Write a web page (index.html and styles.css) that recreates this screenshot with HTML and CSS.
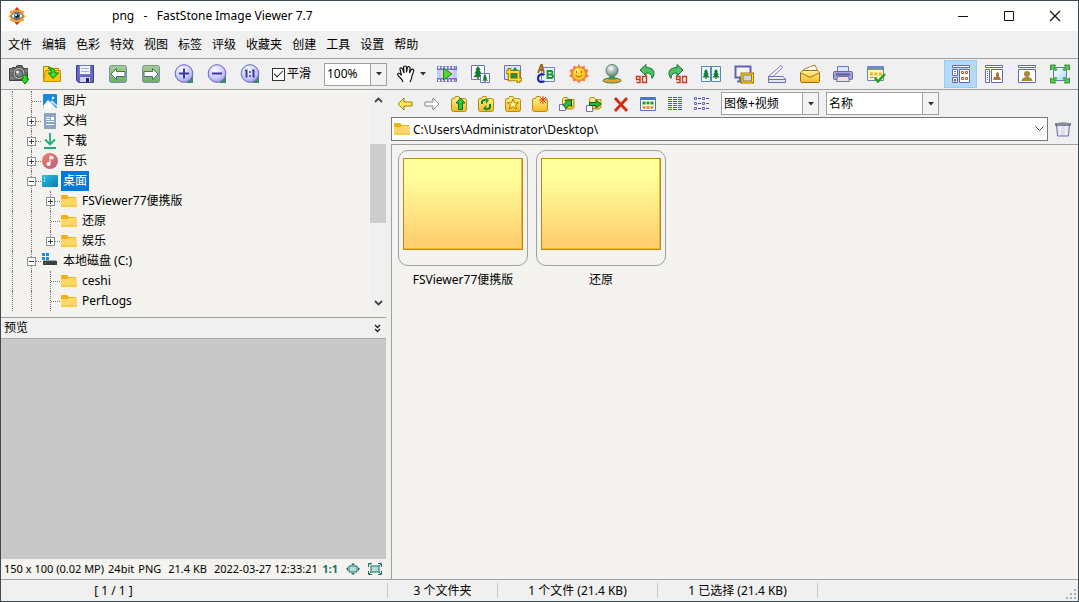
FILE: index.html
```html
<!DOCTYPE html>
<html lang="zh-CN">
<head>
    <meta charset="UTF-8">
    <meta name="viewport" content="width=device-width, initial-scale=1.0">
    <title>png - FastStone Image Viewer 7.7</title>
    <link rel="stylesheet" href="styles.css">
</head>
<body>
    <!-- Shared gradients and symbols -->
    <svg class="defs" width="0" height="0" aria-hidden="true">
        <defs>
            <linearGradient id="gold" x1="0" y1="0" x2="0" y2="1"><stop offset="0" stop-color="#fff59a"/><stop offset="1" stop-color="#f5b820"/></linearGradient>
            <linearGradient id="sky" x1="0" y1="0" x2="1" y2="1"><stop offset="0" stop-color="#ffffff"/><stop offset="1" stop-color="#a5dcf5"/></linearGradient>
            <linearGradient id="leaf" x1="0" y1="0" x2="0" y2="1"><stop offset="0" stop-color="#a4d08c"/><stop offset="1" stop-color="#6caf62"/></linearGradient>
            <radialGradient id="lilac" cx=".4" cy=".3" r=".8"><stop offset="0" stop-color="#fbfbff"/><stop offset=".6" stop-color="#c8c8fa"/><stop offset="1" stop-color="#9090e0"/></radialGradient>
            <radialGradient id="ball" cx=".4" cy=".3" r=".7"><stop offset="0" stop-color="#fafafa"/><stop offset="1" stop-color="#608878"/></radialGradient>
            <linearGradient id="music" x1="0" y1="0" x2="1" y2="1"><stop offset="0" stop-color="#f08060"/><stop offset="1" stop-color="#b86088"/></linearGradient>
            <linearGradient id="desk" x1="0" y1="0" x2="1" y2="1"><stop offset="0" stop-color="#2cc4dc"/><stop offset="1" stop-color="#0a78b8"/></linearGradient>
        </defs>
        <symbol id="folder" viewBox="0 0 16 16">
            <path d="M0 3q0-1 1-1h5l2 2h7v9H0z" fill="#f0b018"/>
            <path d="M0 6h6l2-1h7q1 0 1 1v7q0 1-1 1H1q-1 0-1-1z" fill="#ffd766"/>
            <path d="M0 12h16v1q0 1-1 1H1q-1 0-1-1z" fill="#fcc848"/>
        </symbol>
        <symbol id="book" viewBox="0 0 18 18">
            <path d="M1.500 5q0-1.500 1.500-1.500h1.500l1-2H9l1 2h4.500q2 0 2 2v9q0 2-2 2h-11q-2 0-2-2z" fill="url(#gold)" stroke="#b88a10"/>
        </symbol>
        <symbol id="caret" viewBox="0 0 6 4"><path d="M0 0h6L3 3.500z" fill="#333"/></symbol>
        <symbol id="tree-shape" viewBox="0 0 10 14">
            <path d="M5 0L8 4H6.500L9 8H7l3 4H0l3-4H1l2.500-4H2z" fill="#108030"/><path d="M4 12h2v2H4z" fill="#805020"/>
        </symbol>
    </svg>

    <div class="window">
        <header class="title-bar">
            <svg class="app-icon" width="18" height="18" viewBox="0 0 18 18">
                <path d="M9 0l3 3 4 1-.5 4L18 9l-2.500 2 .5 3-4 1-3 3-3-3-4-1 .5-3L0 9l2.500-1L2 4l4-1z" fill="#f0a040"/>
                <path d="M6.500 3L9 0l2.500 3zM6.500 15L9 18l2.500-3z" fill="#d03818"/>
                <path d="M2.500 9q6.500-8 13 0-6.500 7-13 0z" fill="#f4f4e8" stroke="#605038"/>
                <circle cx="9" cy="9" r="3.200" fill="#4c7890"/><circle cx="9" cy="9" r="1.800" fill="#111"/><circle cx="8" cy="8" r="1" fill="#fff"/>
            </svg>
            <h1>png&nbsp;&nbsp; -&nbsp;&nbsp; FastStone Image Viewer 7.7</h1>
            <div class="window-buttons">
                <button type="button" aria-label="最小化"><svg width="12" height="12"><path d="M1 6.500h10" stroke="#111"/></svg></button>
                <button type="button" aria-label="最大化"><svg width="12" height="12"><path d="M1.500 1.500h9v9h-9z" fill="none" stroke="#111"/></svg></button>
                <button type="button" aria-label="关闭"><svg width="12" height="12"><path d="M1 1l10 10M11 1L1 11" stroke="#111" stroke-width="1.200"/></svg></button>
            </div>
        </header>

        <nav class="menu-bar">
            <button type="button">文件</button>
            <button type="button">编辑</button>
            <button type="button">色彩</button>
            <button type="button">特效</button>
            <button type="button">视图</button>
            <button type="button">标签</button>
            <button type="button">评级</button>
            <button type="button">收藏夹</button>
            <button type="button">创建</button>
            <button type="button">工具</button>
            <button type="button">设置</button>
            <button type="button">帮助</button>
        </nav>

        <div class="toolbar">
            <button type="button" class="tool" aria-label="获取图像"><svg viewBox="0 0 20 20">
                <path d="M.5 4.500h3v-1h3v1l1.500-3h5l1.500 3h4v12H.5z" fill="#707070" stroke="#444"/>
                <path d="M1 7h18M1 14h18" stroke="#909090"/><circle cx="10" cy="9.500" r="6" fill="#c8c8c8" stroke="#404040"/>
                <circle cx="10" cy="9.500" r="4" fill="#788088" stroke="#444"/><circle cx="8.500" cy="8" r="1.500" fill="#e8f0f4"/>
                <path d="M14 11h4v4h2l-4 5-4-5h2z" fill="#20e020" stroke="#107810"/></svg></button>
            <button type="button" class="tool" aria-label="打开"><svg viewBox="0 0 20 20">
                <path d="M1.500 2.500h6l2 2h7v13h-15z" fill="#ffe028" stroke="#b88000"/>
                <path d="M3.500 6.500h15v11h-17z" fill="#fcc414" stroke="#c89000"/>
                <path d="M6 4q7-1 7 5h3.500L11 14.500 6.500 9H10q0-3-4-5z" fill="#30e830" stroke="#087808"/></svg></button>
            <button type="button" class="tool" aria-label="另存为"><svg viewBox="0 0 20 20">
                <path d="M1.500 1.500h17v17h-15l-2-2z" fill="#6666c4" stroke="#3c3c90"/>
                <path d="M4.500 1.500h11v9h-11z" fill="#f4f4fc" stroke="#7878b8"/><path d="M6 4.500h8M6 7.500h8" stroke="#aab0d0"/>
                <path d="M5 13h10v5H5z" fill="#d0d0e8"/><path d="M11 14h3v4h-3z" fill="#282860"/></svg></button>
            <button type="button" class="tool" aria-label="上一张"><svg viewBox="0 0 20 20">
                <rect x="1.500" y="1.500" width="17" height="17" rx="2" fill="url(#leaf)" stroke="#7890b0"/>
                <path d="M3 10l5.500-5.500v3H17v5H8.500v3z" fill="#fff" stroke="#4a6890"/></svg></button>
            <button type="button" class="tool" aria-label="下一张"><svg viewBox="0 0 20 20">
                <rect x="1.500" y="1.500" width="17" height="17" rx="2" fill="url(#leaf)" stroke="#7890b0"/>
                <path d="M17 10l-5.500-5.500v3H3v5h8.500v3z" fill="#fff" stroke="#4a6890"/></svg></button>
            <button type="button" class="tool" aria-label="放大"><svg viewBox="0 0 20 20">
                <path d="M12 19h7v-8z" fill="#389060"/><circle cx="10" cy="9.500" r="8.800" fill="url(#lilac)" stroke="#6464c4"/>
                <path d="M5 9.500h10M10 4.500v10" stroke="#3838a8" stroke-width="2"/></svg></button>
            <button type="button" class="tool" aria-label="缩小"><svg viewBox="0 0 20 20">
                <path d="M12 19h7v-8z" fill="#389060"/><circle cx="10" cy="9.500" r="8.800" fill="url(#lilac)" stroke="#6464c4"/>
                <path d="M5 9.500h10" stroke="#3838a8" stroke-width="2"/></svg></button>
            <button type="button" class="tool" aria-label="实际大小"><svg viewBox="0 0 20 20">
                <path d="M12 19h7v-8z" fill="#389060"/><circle cx="10" cy="9.500" r="8.800" fill="url(#lilac)" stroke="#6464c4"/>
                <path d="M6.500 5.500v8M13.500 5.500v8" stroke="#3838a8" stroke-width="2"/><path d="M5 6.500h1M12 6.500h1M10 7v2M10 11v2" stroke="#3838a8" stroke-width="1.500"/></svg></button>

            <label class="smooth"><input type="checkbox" checked>平滑</label>

            <span class="combo combo-zoom">
                <select aria-label="缩放"><option>100%</option></select>
                <span class="combo-arrow"><svg width="6" height="4"><use href="#caret"/></svg></span>
            </span>

            <button type="button" class="tool tool-hand" aria-label="手形工具"><svg viewBox="0 0 20 20">
                <path d="M7 18q-1-3-4-5.500-2.500-2.500-.5-3.200 1.500-.3 3 2L4 5.500Q3.800 3.800 5 3.800t1.700 1.500L8 9 7.600 3.500Q7.500 2 9 2t1.500 1.500V8.500l.8-4.500q.2-1.500 1.500-1.300t1.200 1.600L13.500 9l1.500-3q.8-1.200 2-.6t.5 2L16 12q-.5 3-2 6" fill="#fff" stroke="#111" stroke-width="1.200"/></svg>
                <svg class="drop" viewBox="0 0 6 4"><use href="#caret"/></svg></button>
            <button type="button" class="tool" aria-label="幻灯片"><svg viewBox="0 0 20 20">
                <path d="M0 2h20v16H0z" fill="#7070c8"/><path d="M1 3.500h18M1 16.500h18" stroke="#fff" stroke-width="2" stroke-dasharray="2 1.500"/>
                <path d="M0 6h4v8H0zM16 6h4v8h-4z" fill="#b8d0f8"/><path d="M4 6h12v8H4z" fill="#f4c8e8"/>
                <path d="M6.500 4l8.500 6-8.500 6z" fill="#50d830" stroke="#208818"/></svg></button>
            <button type="button" class="tool" aria-label="调整大小"><svg viewBox="0 0 20 20">
                <path d="M1.500 1.500h13v14h-13z" fill="#fff" stroke="#7070c8"/><use href="#tree-shape" x="2" y="2" width="12" height="13"/>
                <path d="M10.500 9.500h9v9h-9z" fill="#fff" stroke="#7070c8"/><use href="#tree-shape" x="12" y="10" width="6" height="8"/></svg></button>
            <button type="button" class="tool" aria-label="裁剪"><svg viewBox="0 0 20 20">
                <path d="M1.500 1.500h16v14h-16z" fill="#d4e8fc" stroke="#7070c8"/><path d="M7 8h8v7H7z" fill="#189050"/><path d="M9 7l3-4 3 4z" fill="#189050"/>
                <path d="M6.500 4v11.500H19M3 8h12.500V19" fill="none" stroke="#906400" stroke-width="3.600"/>
                <path d="M6.500 5v10.500H18.500M3.500 8h12V18.500" fill="none" stroke="#ffe020" stroke-width="1.800"/></svg></button>
            <button type="button" class="tool" aria-label="画板"><svg viewBox="0 0 20 20">
                <path d="M5.500 3.500h13v14h-13z" fill="#eef4fc" stroke="#6888c8"/>
                <path d="M2 9l3-8h1l2 8M3 6h4" fill="none" stroke="#a06810" stroke-width="1.800"/>
                <path d="M11.500 14V7h3q2 0 2 1.500t-2 2h-3 3.500q2 0 2 1.800t-2 1.700z" fill="none" stroke="#109828" stroke-width="1.800"/>
                <path d="M8.500 11Q7 9.800 4.500 10.500 2 11.500 2 14.500q0 3 3 3.500 2 .2 3.500-1" fill="none" stroke="#1818d0" stroke-width="2"/></svg></button>
            <button type="button" class="tool" aria-label="调整光线"><svg viewBox="0 0 20 20">
                <path d="M10 0l2 3 3.500-1.500.5 3.500 3.500.8L18 9.500l2 3-3.500 1.200-.5 3.800-3.500-1L10 19.500l-2.500-3-3.500 1-.5-3.800L0 12.500l2-3L.5 5.800 4 5l.5-3.500L8 3z" fill="#f08050"/>
                <circle cx="10" cy="9.800" r="6.500" fill="#ffd028" stroke="#e88818"/><circle cx="8" cy="7" r="2.500" fill="#fff080"/>
                <path d="M7.500 7v2M12.500 7v2M6.500 11q3.500 4 7 0" fill="none" stroke="#a85010"/></svg></button>
            <button type="button" class="tool" aria-label="调整颜色"><svg viewBox="0 0 20 20">
                <ellipse cx="10" cy="16.500" rx="9" ry="2.500" fill="#f0a028" stroke="#208848"/><path d="M8 11h4l2 4.500H6z" fill="#309858"/>
                <circle cx="10" cy="6.500" r="6" fill="url(#ball)" stroke="#588070"/></svg></button>
            <button type="button" class="tool" aria-label="向左旋转"><svg viewBox="0 0 20 20">
                <path d="M5 6l6-5.500v3q8 0 8 6 0 2.500-2 5 0-6-6-5.500v3z" fill="#50c060" stroke="#18703c"/>
                <path d="M5 15.500H1.500v-3H5v6H1.500M7.500 12.500h4v6h-4z" fill="none" stroke="#c83820" stroke-width="1.400"/></svg></button>
            <button type="button" class="tool" aria-label="向右旋转"><svg viewBox="0 0 20 20">
                <path d="M15 6L9 .5v3Q1 3.500 1 9.500 1 12 3 14.500 3 8.500 9 9v3z" fill="#50c060" stroke="#18703c"/>
                <path d="M12 15.500H8.500v-3H12v6H8.500M14.500 12.500h4v6h-4z" fill="none" stroke="#c83820" stroke-width="1.400"/></svg></button>
            <button type="button" class="tool" aria-label="比较"><svg viewBox="0 0 20 20">
                <path d="M.5 2.500h9v15h-9zM10.500 2.500h9v15h-9z" fill="#e8f8fc" stroke="#5888b8"/>
                <use href="#tree-shape" x="1" y="5" width="8" height="10"/><use href="#tree-shape" x="11" y="5" width="8" height="10"/></svg></button>
            <button type="button" class="tool" aria-label="屏幕"><svg viewBox="0 0 20 20">
                <path d="M1.500 2.500h15v11h-15z" fill="#f4f4ff" stroke="#6060b8" stroke-width="2"/><path d="M3 17.500h6M6 14v3" stroke="#6060b8" stroke-width="2"/>
                <path d="M8 10h10.500v8H8z" fill="#ccd4ec" stroke="#a07800" stroke-width="3"/><path d="M8 10h10.500v8H8z" fill="none" stroke="#ffe028"/></svg></button>
            <button type="button" class="tool" aria-label="扫描"><svg viewBox="0 0 20 20">
                <path d="M1 13L14 1.500l1.500 2L6 12.500z" fill="#fff" stroke="#7070b8"/><path d="M1.500 12.500h14.500l2.500 2.500v3.500h-17z" fill="#e4e4f8" stroke="#7070b8"/>
                <path d="M1.500 15.500h17" stroke="#7070b8"/><path d="M7 13.500h8" stroke="#fff"/></svg></button>
            <button type="button" class="tool" aria-label="电子邮件"><svg viewBox="0 0 20 20">
                <path d="M3 8l1-3 11-4 3 7z" fill="#fff" stroke="#a88830"/><path d="M.5 8.500l2-2h15l2 2v9l-1 1h-17l-1-1z" fill="url(#gold)" stroke="#9c7010"/>
                <path d="M1 9l8 4h2l8-4" fill="none" stroke="#9c7010"/></svg></button>
            <button type="button" class="tool" aria-label="打印"><svg viewBox="0 0 20 20">
                <path d="M4.500 8V2.500h11V8" fill="#d8e8fa" stroke="#7078b0"/><rect x=".5" y="7.500" width="19" height="8" rx="1" fill="#a0a0dc" stroke="#6868a8"/>
                <path d="M3 10.500h14" stroke="#64588c" stroke-width="2"/><path d="M4.500 12.500h11l1 5h-13z" fill="#f8dce0" stroke="#7078a8"/></svg></button>
            <button type="button" class="tool" aria-label="设置"><svg viewBox="0 0 20 20">
                <path d="M1.500 2.500h16v14h-16z" fill="#fdf4c0" stroke="#6888b8"/><path d="M2 3h15v3H2z" fill="#7890b0"/>
                <path d="M4 8.500h3v3H4zM8.500 8.500h3v3h-3zM13 8.500h3v3h-3z" fill="#e8b828"/><path d="M4 13.500h7" stroke="#8898b0"/>
                <path d="M9 14l3 3.500L19 10" fill="none" stroke="#18a020" stroke-width="2.500"/></svg></button>

            <div class="view-modes">
                <button type="button" class="tool active" aria-label="浏览视图"><svg viewBox="0 0 20 20">
                    <path d="M1.500 1.500h17v2h-17zM1.500 5.500h5v6h-5zM1.500 13.500h5v5h-5zM8.500 5.500h10v13h-10z" fill="#fff" stroke="#6464b8"/>
                    <path d="M3 7.500h2M3 9.500h2" stroke="#5878c8"/><path d="M3 17q1-4 2 0z" stroke="#a07830"/>
                    <path d="M10.500 7.500h2v2h-2zM14.500 7.500h2v2h-2zM10.500 13.500h2v2h-2zM14.500 13.500h2v2h-2z" fill="#fff4c0" stroke="#c05820"/></svg></button>
                <button type="button" class="tool" aria-label="窗口视图"><svg viewBox="0 0 20 20">
                    <path d="M1.500 1.500h17v2h-17zM1.500 5.500h4v13h-4zM7.500 5.500h11v13h-11z" fill="#fff" stroke="#6464b8"/><path d="M3.500 7v10" stroke="#5878c8" stroke-dasharray="1 1"/>
                    <path d="M9 16l1-3h2v-4l2-1 1 2v3h1l1 3z" fill="#a87838"/></svg></button>
                <button type="button" class="tool" aria-label="单图视图"><svg viewBox="0 0 20 20">
                    <path d="M1.500 1.500h17v2h-17zM1.500 5.500h17v13h-17z" fill="#fff" stroke="#6464b8"/>
                    <circle cx="10" cy="10" r="3" fill="#a88838"/><path d="M4.500 17q0-3 4-4h3q4 1 4 4z" fill="#a88838"/></svg></button>
                <button type="button" class="tool" aria-label="全屏"><svg viewBox="0 0 20 20">
                    <path d="M3.500 3.500h13v13h-13z" fill="url(#sky)" stroke="#5878b8"/>
                    <path d="M.5 1h5L4.500 3 7 5.500 5.500 7 3 4.500.5 6zM19.500 1v5L17 4.500 14.500 7 13 5.500 15.500 3l-1-2zM.5 19v-5L3 15.500 5.500 13 7 14.500 4.500 17l1 2zM19.500 19h-5l1-2-2.500-2.500 1.500-1.500 2.500 2.500 2.500-1.500z" fill="#50d040" stroke="#208020" stroke-width=".8"/></svg></button>
            </div>
        </div>

        <main class="content">
            <aside class="sidebar">
                <div class="tree-panel">
                    <ul class="tree">
                        <li><i class="guide line"></i><i class="guide line branch"></i><svg class="node-icon" viewBox="0 0 16 16"><rect x="1" y="1" width="14" height="14" rx="1" fill="#1888d8"/><path d="M1 13l5-6 8 8H2z" fill="#fff"/><path d="M8 9l2-2 5 5v2z" fill="#b8e0fa"/><circle cx="11" cy="5" r="1.200" fill="#fff"/></svg><span class="name">图片</span></li>
                        <li><i class="guide line"></i><i class="guide line branch"><button type="button" class="toggle" aria-label="展开"></button></i><svg class="node-icon" viewBox="0 0 16 16"><path d="M2 0h12v16H2z" fill="#8ca4c4"/><path d="M4 4.500h4M4 6.500h4M4 8.500h8M4 11.500h8" stroke="#fff"/><path d="M9 4h3v3H9z" fill="#fff"/></svg><span class="name">文档</span></li>
                        <li><i class="guide line"></i><i class="guide line branch"><button type="button" class="toggle" aria-label="展开"></button></i><svg class="node-icon" viewBox="0 0 16 16"><path d="M8 0v11M3 6.500l5 5 5-5M2 15h12" fill="none" stroke="#18b080" stroke-width="1.800"/></svg><span class="name">下载</span></li>
                        <li><i class="guide line"></i><i class="guide line branch"><button type="button" class="toggle" aria-label="展开"></button></i><svg class="node-icon" viewBox="0 0 16 16"><circle cx="8" cy="8" r="8" fill="url(#music)"/><circle cx="6.500" cy="11" r="2" fill="#fff"/><path d="M8 11V3l3 1v2L8 5" fill="#fff" stroke="#fff"/></svg><span class="name">音乐</span></li>
                        <li><i class="guide line"></i><i class="guide line branch"><button type="button" class="toggle open" aria-label="折叠"></button></i><svg class="node-icon" viewBox="0 0 16 16"><rect y="2" width="16" height="12" rx="1" fill="url(#desk)"/><path d="M2 5h1M2 8h1" stroke="#fff" stroke-width="1.500"/></svg><span class="name selected">桌面</span></li>
                        <li><i class="guide line"></i><i class="guide line"></i><i class="guide line branch"><button type="button" class="toggle" aria-label="展开"></button></i><svg class="node-icon"><use href="#folder"/></svg><span class="name">FSViewer77便携版</span></li>
                        <li><i class="guide line"></i><i class="guide line"></i><i class="guide line branch"></i><svg class="node-icon"><use href="#folder"/></svg><span class="name">还原</span></li>
                        <li><i class="guide line"></i><i class="guide line"></i><i class="guide line branch last"><button type="button" class="toggle" aria-label="展开"></button></i><svg class="node-icon"><use href="#folder"/></svg><span class="name">娱乐</span></li>
                        <li><i class="guide line"></i><i class="guide line branch"><button type="button" class="toggle open" aria-label="折叠"></button></i><svg class="node-icon" viewBox="0 0 16 16"><path d="M0 0h3v3H0zM4 0h3v3H4zM0 4h3v3H0zM4 4h3v3H4z" fill="#1890d8"/><path d="M2 7h12l1 2H1z" fill="#a0a8a8"/><path d="M1 8h14v4H1z" fill="#384040"/><path d="M3 10h1" stroke="#50e080"/></svg><span class="name">本地磁盘 (C:)</span></li>
                        <li><i class="guide line"></i><i class="guide line"></i><i class="guide line branch"></i><svg class="node-icon"><use href="#folder"/></svg><span class="name">ceshi</span></li>
                        <li><i class="guide line"></i><i class="guide line"></i><i class="guide line branch"></i><svg class="node-icon"><use href="#folder"/></svg><span class="name">PerfLogs</span></li>
                    </ul>
                    <div class="scrollbar">
                        <button type="button" aria-label="向上"><svg width="9" height="6"><path d="M1 5l3.500-3.500L8 5" fill="none" stroke="#444" stroke-width="1.800"/></svg></button>
                        <div class="track"><div class="thumb"></div></div>
                        <button type="button" aria-label="向下"><svg width="9" height="6"><path d="M1 1l3.500 3.500L8 1" fill="none" stroke="#444" stroke-width="1.800"/></svg></button>
                    </div>
                </div>
                <section class="preview">
                    <div class="preview-header">
                        <h2>预览</h2>
                        <button type="button" aria-label="收起预览"><svg width="7" height="9"><path d="M1 1l2.500 2.500L6 1M1 5l2.500 2.500L6 5" fill="none" stroke="#222" stroke-width="1.400"/></svg></button>
                    </div>
                    <div class="preview-canvas"></div>
                    <div class="preview-info">
                        <span>150 x 100 (0.02 MP)</span>
                        <span>24bit</span>
                        <span class="format">PNG</span>
                        <span class="size">21.4 KB</span>
                        <span>2022-03-27 12:33:21</span>
                        <div class="preview-tools">
                            <button type="button">1:1</button>
                            <button type="button" aria-label="适合图像"><svg width="14" height="12" viewBox="0 0 14 12"><path d="M3 3h8v6H3z" fill="#b8dcd8" stroke="#187068"/><path d="M7 0l2 2H5zM7 12l2-2H5zM0 6l2-2v4zM14 6l-2-2v4z" fill="#187068"/></svg></button>
                            <button type="button" aria-label="适合窗口"><svg width="14" height="12" viewBox="0 0 14 12"><path d="M3 3h8v6H3z" fill="#b8dcd8" stroke="#187068"/><path d="M.5 4V.5H4L1 .5l2 2M10 .5h3.500V4M13 1l-2 2M.5 8v3.500H4M1 11l2-2M10 11.500h3.500V8M13 11l-2-2" fill="none" stroke="#187068"/></svg></button>
                        </div>
                    </div>
                </section>
            </aside>

            <section class="browser">
                <div class="browser-bar">
                    <button type="button" class="tool small" aria-label="后退"><svg viewBox="0 0 18 18"><path d="M2 9l6-6v4h8v4H8v4z" fill="#ffec50" stroke="#a08010"/></svg></button>
                    <button type="button" class="tool small" aria-label="前进"><svg viewBox="0 0 18 18"><path d="M16 9l-6-6v4H2v4h8v4z" fill="#fafafa" stroke="#888"/></svg></button>
                    <button type="button" class="tool small" aria-label="向上"><svg viewBox="0 0 18 18"><use href="#book"/><path d="M8.500 14.500V8H6l4.500-5L15 8h-2.500v6.500z" fill="#30c838" stroke="#0c7010"/></svg></button>
                    <button type="button" class="tool small" aria-label="刷新"><svg viewBox="0 0 18 18"><use href="#book"/><path d="M5 9V7q0-2 3-2M13 9v3q0 2-3 2" fill="none" stroke="#108818" stroke-width="2"/><path d="M8 3l4 2-3 4zM10 16l-4-2 3-4z" fill="#109820"/></svg></button>
                    <button type="button" class="tool small" aria-label="收藏"><svg viewBox="0 0 18 18"><use href="#book"/><path d="M9 4l1.500 3.800h4L11.500 10l1.200 4L9 11.700 5.300 14l1.200-4-3-2.200h4z" fill="#fff480" stroke="#b07c08"/></svg></button>
                    <button type="button" class="tool small" aria-label="新建文件夹"><svg viewBox="0 0 18 18"><use href="#book"/><path d="M12 1v8M8 5h8M9 2l6 6M15 2L9 8" stroke="#e84020"/></svg></button>
                    <button type="button" class="tool small" aria-label="复制到"><svg viewBox="0 0 18 18"><path d="M4.500 4.500l1-2h4l1 2h5.500v8L14 14H4.500z" fill="url(#gold)" stroke="#b88a10"/><path d="M1.500 9.500h6v6h-6z" fill="#fff" stroke="#7070c0"/><path d="M5 10.500l3.500-3.500L7 5h6.500v6.500l-2-1.500L8 13.500z" fill="#30b838" stroke="#0c5818"/></svg></button>
                    <button type="button" class="tool small" aria-label="移动到"><svg viewBox="0 0 18 18"><path d="M4.500 4.500l1-2h4l1 2h5.500v8L14 14H4.500z" fill="url(#gold)" stroke="#b88a10"/><path d="M1.500 10.500h6v6h-6z" fill="#fff" stroke="#7070c0"/><path d="M4.500 7.500H11V5l5 4-5 4v-2.500H4.500z" fill="#30b838" stroke="#0c5818"/></svg></button>
                    <button type="button" class="tool small" aria-label="删除"><svg viewBox="0 0 18 18"><path d="M3 3l12 13M15 3L3 16" stroke="#d82810" stroke-width="2.800"/></svg></button>
                    <button type="button" class="tool small" aria-label="缩略图"><svg viewBox="0 0 18 18"><path d="M1.500 2.500h15v13h-15z" fill="#fff" stroke="#4878c0"/><path d="M2 4h14" stroke="#4878c0" stroke-width="2"/><path d="M3.500 8h11" stroke="#189838" stroke-width="3" stroke-dasharray="3 1"/><path d="M3.500 12.500h11" stroke="#f09040" stroke-width="3" stroke-dasharray="3 1"/></svg></button>
                    <button type="button" class="tool small" aria-label="详细信息"><svg viewBox="0 0 18 18"><path d="M2 2.500h14M2 4.500h14M2 6.500h14M2 8.500h14M2 10.500h14M2 12.500h14M2 14.500h14" stroke="#4858d0" stroke-dasharray="4 1"/></svg></button>
                    <button type="button" class="tool small" aria-label="列表"><svg viewBox="0 0 18 18"><path d="M1.500 2.500h2v2h-2zM1.500 7.500h2v2h-2zM1.500 12.500h2v2h-2zM9.500 2.500h2v2h-2zM9.500 7.500h2v2h-2zM9.500 12.500h2v2h-2z" fill="none" stroke="#6868c0"/><path d="M5 3.500h3M5 8.500h3M5 13.500h3M13 3.500h3M13 8.500h3M13 13.500h3" stroke="#505090"/></svg></button>
                    <span class="combo combo-filter">
                        <select aria-label="文件类型"><option>图像+视频</option></select>
                        <span class="combo-arrow"><svg width="6" height="4"><use href="#caret"/></svg></span>
                    </span>
                    <span class="combo combo-sort">
                        <select aria-label="排序"><option>名称</option></select>
                        <span class="combo-arrow"><svg width="6" height="4"><use href="#caret"/></svg></span>
                    </span>
                </div>
                <div class="path-bar">
                    <div class="path-box">
                        <svg class="node-icon"><use href="#folder"/></svg>
                        <input type="text" aria-label="路径" value="C:\Users\Administrator\Desktop\">
                        <button type="button" aria-label="历史路径"><svg width="9" height="6"><path d="M.5 .5l4 4 4-4" fill="none" stroke="#444"/></svg></button>
                    </div>
                    <button type="button" class="trash" aria-label="回收站"><svg width="16" height="16" viewBox="0 0 16 16"><path d="M1.500 4h13l-1 11h-11z" fill="#e0e0ec" stroke="#7070b0"/><path d="M5 5v9M11 5v9" stroke="#fff"/><path d="M0 2.500q8-2 16 0v2H0z" fill="#606078"/><path d="M2 3h12" stroke="#b8b8c8"/></svg></button>
                </div>
                <div class="files">
                    <figure class="file">
                        <div class="frame"><div class="folder-thumb"></div></div>
                        <figcaption>FSViewer77便携版</figcaption>
                    </figure>
                    <figure class="file">
                        <div class="frame"><div class="folder-thumb"></div></div>
                        <figcaption>还原</figcaption>
                    </figure>
                </div>
            </section>
        </main>

        <footer class="status-bar">
            <div class="cell cell-index"><span>[ 1 / 1 ]</span></div>
            <div class="cell cell-folders">3 个文件夹</div>
            <div class="cell cell-files">1 个文件 (21.4 KB)</div>
            <div class="cell cell-selected">1 已选择 (21.4 KB)</div>
            <svg class="grip" width="12" height="12" viewBox="0 0 12 12"><path d="M8 0h2v2H8zM4 4h2v2H4zM8 4h2v2H8zM0 8h2v2H0zM4 8h2v2H4zM8 8h2v2H8z" fill="#b0b0b0"/></svg>
        </footer>
    </div>
</body>
</html>
```
FILE: styles.css
```css
* {
    box-sizing: border-box;
}

body {
    margin: 0;
    font-family: "Noto Sans", "Noto Sans CJK SC", sans-serif;
    font-size: 12px;
    line-height: 20px;
    color: #000;
}

button,
input,
select {
    margin: 0;
    padding: 0;
    border: none;
    background: none;
    font: inherit;
    color: inherit;
}

button {
    display: flex;
    align-items: center;
    justify-content: center;
}

h1,
h2 {
    margin: 0;
    font-size: 12px;
    font-weight: normal;
}

svg {
    display: block;
    flex-shrink: 0;
}

.defs {
    position: absolute;
}

.window {
    display: flex;
    flex-direction: column;
    height: 100vh;
    border: 1px solid #3c4a54;
    background-color: #f0f0f0;
}

/* Title bar */
.title-bar {
    display: flex;
    align-items: center;
    height: 30px;
    padding-left: 7px;
    background-color: #fff;
}

.title-bar h1 {
    flex: 1;
    margin-left: 86px;
}

.window-buttons {
    display: flex;
}

.window-buttons button {
    width: 46px;
    height: 29px;
}

/* Menu */
.menu-bar {
    display: flex;
    height: 28px;
    padding: 0 2px;
    border-bottom: 1px solid #a0a0a0;
}

.menu-bar button {
    padding: 0 5px;
}

/* Main toolbar */
.toolbar {
    display: flex;
    align-items: center;
    height: 31px;
    padding: 0 2px 0 1px;
    border-bottom: 1px solid #a0a0a0;
}

.tool {
    width: 33px;
    height: 28px;
}

.tool svg {
    width: 20px;
    height: 20px;
}

.tool.active {
    background-color: #b5d9f8;
    border: 1px solid #98cbf5;
}

.tool-hand {
    width: 38px;
    margin-left: 5px;
    gap: 4px;
}

.tool-hand .drop {
    width: 6px;
    height: 4px;
}

.smooth {
    display: flex;
    align-items: center;
    gap: 2px;
    width: 58px;
    padding-left: 6px;
}

.smooth input {
    appearance: none;
    display: grid;
    place-items: center;
    width: 13px;
    height: 13px;
    border: 1px solid #333;
    background-color: #fff;
}

.smooth input:checked::after {
    content: "";
    width: 8px;
    height: 4px;
    margin-bottom: 3px;
    border-left: 1px solid #222;
    border-bottom: 1px solid #222;
    transform: rotate(-45deg);
}

.view-modes {
    display: flex;
    margin-left: auto;
}

/* Drop-downs */
.combo {
    position: relative;
    display: block;
    height: 23px;
    border: 1px solid #a0a0a0;
    background-color: #fff;
}

.combo select {
    appearance: none;
    width: 100%;
    height: 21px;
    padding: 0 18px 0 2px;
}

.combo-arrow {
    position: absolute;
    top: 0;
    right: 0;
    display: flex;
    align-items: center;
    justify-content: center;
    width: 16px;
    height: 21px;
    border-left: 1px solid #a0a0a0;
    background-color: #f3f3f3;
    pointer-events: none;
}

.combo-zoom {
    width: 63px;
}

.combo-filter {
    width: 98px;
    margin-left: 6px;
}

.combo-sort {
    width: 113px;
    margin-left: 7px;
}

/* Columns */
.content {
    display: flex;
    flex: 1;
    min-height: 0;
    border-bottom: 1px solid #a0a0a0;
}

.sidebar {
    display: flex;
    flex-direction: column;
    width: 385px;
    background-color: #f4f3ef;
}

/* Folder tree */
.tree-panel {
    display: flex;
    padding: 1px 0 6px;
    border-bottom: 1px solid #a0a0a0;
}

.tree {
    flex: 1;
    margin: 0;
    padding: 0 0 0 2px;
    list-style: none;
}

.tree li {
    display: flex;
    align-items: center;
    height: 20px;
}

.guide {
    position: relative;
    width: 19px;
    height: 20px;
}

.guide.line::before {
    content: "";
    position: absolute;
    left: 9px;
    top: 0;
    bottom: 0;
    border-left: 1px dotted #777;
}

.guide.last::before {
    bottom: 10px;
}

.guide.branch::after {
    content: "";
    position: absolute;
    left: 10px;
    right: 0;
    top: 10px;
    border-top: 1px dotted #777;
}

.toggle {
    position: absolute;
    z-index: 1;
    left: 5px;
    top: 6px;
    width: 9px;
    height: 9px;
    border: 1px solid #919191;
    background: linear-gradient(#345, #345) center / 5px 1px no-repeat, linear-gradient(#345, #345) center / 1px 5px no-repeat, #fff;
}

.toggle.open {
    background: linear-gradient(#345, #345) center / 5px 1px no-repeat, #fff;
}

.node-icon {
    width: 16px;
    height: 16px;
    margin-left: 1px;
}

.name {
    height: 20px;
    margin-left: 3px;
    padding: 0 2px;
    line-height: 20px;
}

.name.selected {
    background-color: #0078d7;
    color: #fff;
}

.scrollbar {
    display: flex;
    flex-direction: column;
    width: 16px;
    background-color: #f0f0f0;
}

.scrollbar button {
    width: 16px;
    height: 17px;
}

.track {
    display: grid;
    flex: 1;
    grid-template-rows: 36fr 79fr 71fr;
}

.thumb {
    grid-row: 2;
    background-color: #cdcdcd;
}

/* Preview */
.preview {
    display: flex;
    flex: 1;
    flex-direction: column;
}

.preview-header {
    display: flex;
    align-items: center;
    justify-content: space-between;
    height: 20px;
    padding: 0 5px 0 3px;
    background-color: #f0f0f0;
}

.preview-canvas {
    flex: 1;
    border-top: 1px solid #a8a8a8;
    background-color: #c8c8c8;
}

.preview-info {
    display: flex;
    align-items: center;
    gap: 4px;
    height: 20px;
    padding: 0 4px 0 3px;
    font-size: 11px;
    white-space: nowrap;
}

.preview-info .size {
    margin: 0 3px;
}

.preview-tools {
    display: flex;
    align-items: center;
    gap: 8px;
    margin-left: auto;
}

.preview-tools button {
    color: #187068;
    font-weight: bold;
}

/* Browser */
.browser {
    display: flex;
    flex: 1;
    flex-direction: column;
    min-width: 0;
    margin-left: 5px;
}

.browser-bar {
    display: flex;
    align-items: center;
    height: 27px;
}

.tool.small {
    width: 27px;
    height: 26px;
}

.tool.small svg {
    width: 18px;
    height: 18px;
}

.path-bar {
    display: flex;
    align-items: center;
    padding-right: 7px;
}

.path-box {
    display: flex;
    flex: 1;
    align-items: center;
    height: 24px;
    padding: 0 3px 0 1px;
    border: 1px solid #777;
    background-color: #fff;
}

.path-box input {
    flex: 1;
    height: 22px;
    margin-left: 3px;
    outline: none;
}

.path-box button {
    width: 10px;
    height: 20px;
}

.trash {
    width: 16px;
    height: 20px;
    margin-left: 7px;
}

.files {
    display: flex;
    flex: 1;
    align-items: flex-start;
    gap: 8px;
    margin-top: 3px;
    padding: 5px 6px;
    border: solid #a0a0a0;
    border-width: 1px 0 0 1px;
    background-color: #f4f3ef;
}

.file {
    width: 130px;
    margin: 0;
    text-align: center;
}

.frame {
    height: 116px;
    padding: 7px 4px;
    border: 1px solid #a0a0a0;
    border-radius: 10px;
}

.folder-thumb {
    height: 92px;
    border: 1px solid #b48a14;
    background: linear-gradient(#ffff9c 20%, #ffd070 90%);
    box-shadow: inset -1px -1px #f0b830;
}

.file figcaption {
    margin-top: 4px;
}

/* Status bar */
.status-bar {
    display: flex;
    align-items: center;
    height: 21px;
}

.cell {
    height: 15px;
    border-right: 1px solid #c8c8c8;
    line-height: 15px;
    text-align: center;
}

.cell-index {
    width: 387px;
    padding-right: 161px;
}

.cell-folders {
    width: 110px;
}

.cell-files {
    width: 160px;
}

.cell-selected {
    width: 160px;
}

.grip {
    align-self: flex-end;
    margin-left: auto;
}
```
